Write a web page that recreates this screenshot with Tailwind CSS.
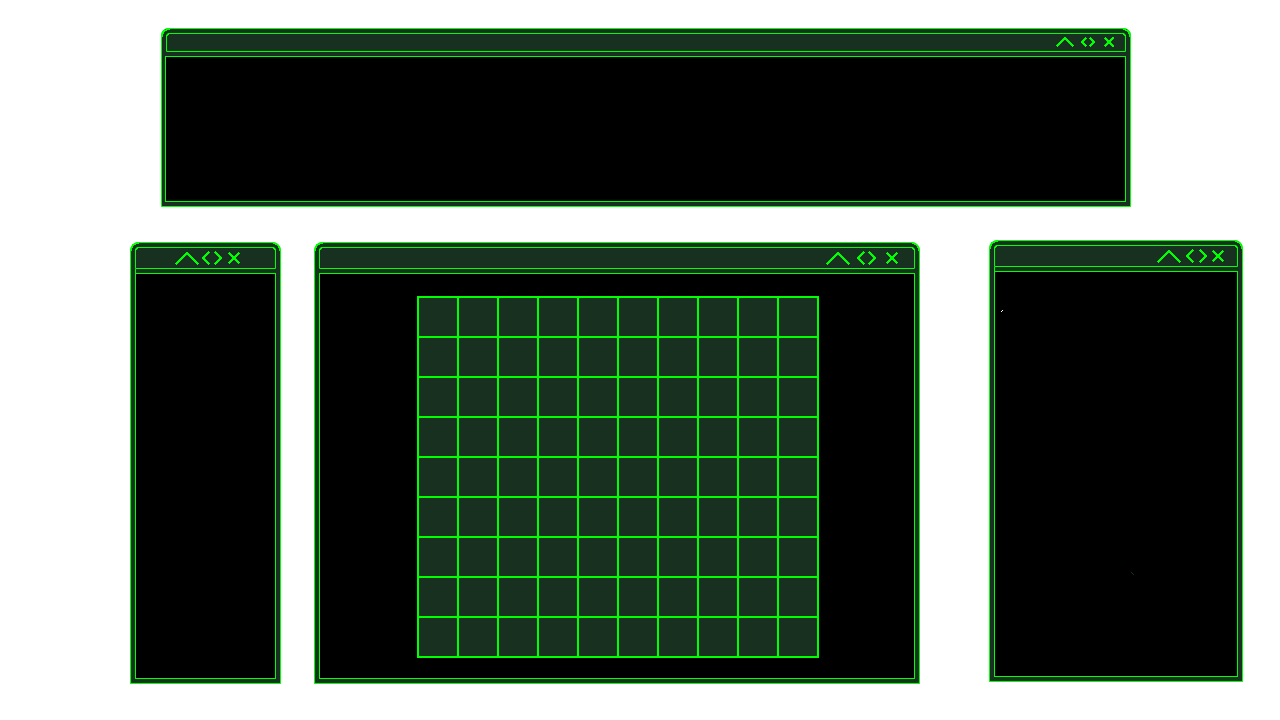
<!DOCTYPE html>
<html lang="en">
<head>
<meta charset="utf-8">
<meta name="viewport" content="width=device-width, initial-scale=1">
<title>Terminal windows</title>
<script src="https://cdn.jsdelivr.net/npm/@tailwindcss/browser@4"></script>
</head>
<body class="bg-white">
<svg class="hidden" aria-hidden="true">
  <symbol id="up" viewBox="0 0 24 14"><path stroke-width="2.1" d="M.9 13.1 12 2 23.1 13.1"/></symbol>
  <symbol id="left" viewBox="0 0 8 14"><path d="M7.3.7 1.3 7l6 6.3"/></symbol>
  <symbol id="right" viewBox="0 0 8 14"><path d="M.7.7 6.7 7l-6 6.3"/></symbol>
  <symbol id="close" viewBox="0 0 12 14"><path d="M.8 1.8 11.2 12.2M11.2 1.8.8 12.2"/></symbol>
  <symbol id="corner" viewBox="0 0 10 10"><path fill="none" stroke="#0f0" stroke-width="1.7" d="M.8 8.5V8L3 3.2 8 .8h.5"/><path fill="none" stroke="#0f0" stroke-width="1.5" d="M5.5 8.5 6 7.5 7.5 6 8.5 5.5"/></symbol>
</svg>
<main class="relative min-h-screen overflow-hidden">

  <section aria-label="Top window" class="absolute left-[161px] top-7 w-[970px] h-[179px] flex flex-col gap-1 p-1 border border-[#00ff00] rounded-t-[7px] bg-[#183020]">
    <svg class="absolute -left-px -top-px size-[10px]" shape-rendering="crispEdges" aria-hidden="true"><use href="#corner"/></svg>
    <svg class="absolute -right-px -top-px size-[10px] -scale-x-100" shape-rendering="crispEdges" aria-hidden="true"><use href="#corner"/></svg>
    <header class="flex h-[19px] shrink-0 items-center justify-end border border-[#00ff00] rounded-t-[3px] pr-[11px]">
      <button aria-label="Minimize" class="mr-[7px]"><svg class="block w-[18px] h-[11px] fill-none stroke-[#00ff00] stroke-2" shape-rendering="crispEdges" viewBox="0 0 18 11"><path d="M.7 9.7 9 1.4l8.3 8.3"/></svg></button>
      <button aria-label="Resize" class="mr-[9px]"><svg class="block w-[14px] h-[11px] fill-none stroke-[#00ff00] stroke-2" shape-rendering="crispEdges" viewBox="0 0 14 11"><path d="M5.5.7 1.2 5l4.3 4.3M8.5.7 12.8 5 8.5 9.3"/></svg></button>
      <button aria-label="Close"><svg class="block w-[10px] h-[11px] fill-none stroke-[#00ff00] stroke-2" shape-rendering="crispEdges" viewBox="0 0 10 11"><path d="m.6.6 9 9M9.6.6.6 9.6"/></svg></button>
    </header>
    <div class="-ml-px grow border border-[#00ff00] bg-black"></div>
  </section>

  <section aria-label="Left window" class="absolute left-[130px] top-[242px] w-[151px] h-[442px] flex flex-col p-1 border border-[#00ff00] rounded-t-[8px] bg-[#183020]">
    <svg class="absolute -left-px -top-px size-[10px]" shape-rendering="crispEdges" aria-hidden="true"><use href="#corner"/></svg>
    <svg class="absolute -right-px -top-px size-[10px] -scale-x-100" shape-rendering="crispEdges" aria-hidden="true"><use href="#corner"/></svg>
    <header class="flex h-[22px] shrink-0 items-center justify-end border border-[#00ff00] rounded-t-[3px] pr-[35px] fill-none stroke-[#00ff00] stroke-2">
      <button aria-label="Minimize" class="mr-[3px]"><svg class="block w-6 h-[14px]" shape-rendering="crispEdges"><use href="#up"/></svg></button>
      <button aria-label="Resize" class="mr-[6px] flex gap-[4px]"><svg class="block w-2 h-[14px]" shape-rendering="crispEdges"><use href="#left"/></svg><svg class="block w-2 h-[14px]" shape-rendering="crispEdges"><use href="#right"/></svg></button>
      <button aria-label="Close"><svg class="block w-3 h-[14px]" shape-rendering="crispEdges"><use href="#close"/></svg></button>
    </header>
    <div class="h-1 shrink-0 border-l border-[#00ff00]"></div>
    <div class="grow border border-[#00ff00] bg-black"></div>
  </section>

  <section aria-label="Board window" class="absolute left-[314px] top-[242px] w-[606px] h-[442px] flex flex-col gap-1 p-1 border border-[#00ff00] rounded-t-[8px] bg-[#183020]">
    <svg class="absolute -left-px -top-px size-[10px]" shape-rendering="crispEdges" aria-hidden="true"><use href="#corner"/></svg>
    <svg class="absolute -right-px -top-px size-[10px] -scale-x-100" shape-rendering="crispEdges" aria-hidden="true"><use href="#corner"/></svg>
    <header class="flex h-[22px] shrink-0 items-center justify-end border border-[#00ff00] rounded-t-[3px] pr-[16px] fill-none stroke-[#00ff00] stroke-2">
      <button aria-label="Minimize" class="mr-[7px]"><svg class="block w-6 h-[14px]" shape-rendering="crispEdges"><use href="#up"/></svg></button>
      <button aria-label="Resize" class="mr-[10px] flex gap-[3px]"><svg class="block w-2 h-[14px]" shape-rendering="crispEdges"><use href="#left"/></svg><svg class="block w-2 h-[14px]" shape-rendering="crispEdges"><use href="#right"/></svg></button>
      <button aria-label="Close"><svg class="block w-3 h-[14px]" shape-rendering="crispEdges"><use href="#close"/></svg></button>
    </header>
    <div class="grow border border-[#00ff00] bg-black pl-[97px] pt-[22px]">
      <div id="board" class="grid w-max grid-cols-[repeat(10,38px)] auto-rows-[38px] gap-[2px] bg-[#00ff00] p-[2px]"></div>
    </div>
  </section>

  <section aria-label="Right window" class="absolute left-[989px] top-[240px] w-[254px] h-[442px] flex flex-col p-1 border border-[#00ff00] rounded-t-[8px] bg-[#183020]">
    <svg class="absolute -left-px -top-px size-[10px]" shape-rendering="crispEdges" aria-hidden="true"><use href="#corner"/></svg>
    <svg class="absolute -right-px -top-px size-[10px] -scale-x-100" shape-rendering="crispEdges" aria-hidden="true"><use href="#corner"/></svg>
    <header class="flex h-[22px] shrink-0 items-center justify-end border border-[#00ff00] rounded-t-[3px] pr-[13px] fill-none stroke-[#00ff00] stroke-2">
      <button aria-label="Minimize" class="mr-[5px]"><svg class="block w-6 h-[14px]" shape-rendering="crispEdges"><use href="#up"/></svg></button>
      <button aria-label="Resize" class="mr-[5px] flex gap-[5px]"><svg class="block w-2 h-[14px]" shape-rendering="crispEdges"><use href="#left"/></svg><svg class="block w-2 h-[14px]" shape-rendering="crispEdges"><use href="#right"/></svg></button>
      <button aria-label="Close"><svg class="block w-3 h-[14px]" shape-rendering="crispEdges"><use href="#close"/></svg></button>
    </header>
    <div class="h-1 shrink-0 border-l border-[#00ff00]"></div>
    <div class="grow border border-[#00ff00] bg-black">
      <svg class="block w-[242px] h-[404px]" viewBox="0 0 242 404" shape-rendering="crispEdges" aria-hidden="true">
        <path fill="#fff" d="M6 39h1v1h-1zM7 38h1v1h-1z"/>
        <path fill="#183020" d="M136 300h1v1h-1zM137 301h1v1h-1zM138 302h1v1h-1z"/>
      </svg>
    </div>
  </section>
</main>
<script>
  const board = document.getElementById('board');
  for (let i = 0; i < 90; i++) {
    const cell = document.createElement('div');
    cell.className = 'bg-[#183020]';
    board.append(cell);
  }
</script>
</body>
</html>
